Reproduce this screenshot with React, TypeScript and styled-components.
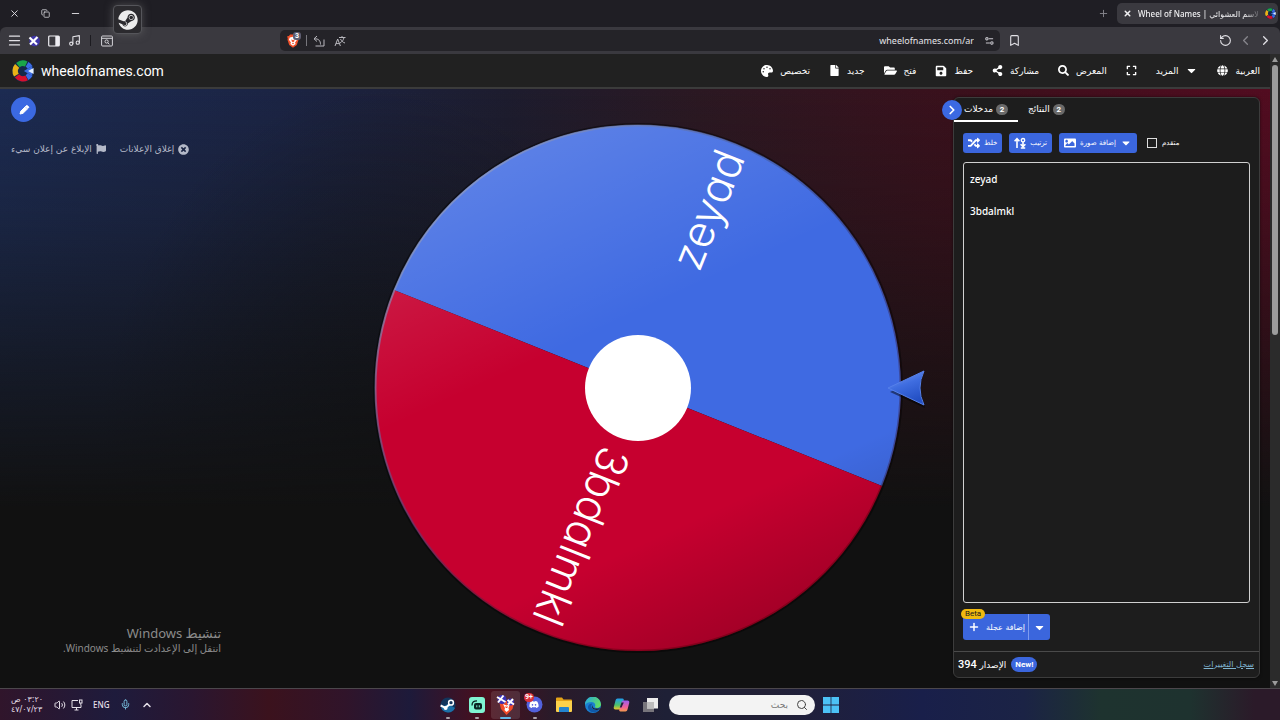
import React from "react";
import styled, { createGlobalStyle, css } from "styled-components";
import {
  FaPalette, FaFile, FaFolderOpen, FaShareAlt, FaSearch, FaExpand, FaGlobe, FaCaretDown,
  FaRandom, FaImage, FaFlag, FaTimesCircle, FaSteam, FaDiscord, FaSave,
} from "react-icons/fa";
import {
  X, Copy, Minus, Menu, Plus, Bookmark, RotateCcw, ChevronLeft, ChevronRight,
  ChevronUp, Mic, Search, Volume2, Music,
} from "lucide-react";

const GlobalStyle = createGlobalStyle`
  * { box-sizing: border-box; }
  body { margin: 0; background: #111; color: #fff; font-family: Roboto, "DejaVu Sans", sans-serif; font-size: 10px; }
  button { font: inherit; color: inherit; background: none; border: 0; padding: 0; cursor: pointer; }
  svg { display: block; flex: none; }
  a { color: inherit; }
`;

const Desktop = styled.div`
  display: flex;
  flex-direction: column;
  min-height: 100vh;
  position: relative;
  overflow: hidden;
`;

const Browser = styled.div`
  background: #1f1e24;
`;

const TabStrip = styled.div`
  display: flex;
  align-items: center;
  height: 27px;
`;

const IconButton = styled.button<{ $w?: number; $dim?: boolean }>`
  width: ${(p) => p.$w ?? 20}px;
  height: 20px;
  display: inline-flex;
  align-items: center;
  justify-content: center;
  color: ${(p) => (p.$dim ? "#88878d" : "#e2e1e6")};
`;

const Spacer = styled.div`
  flex: 1;
`;

const Tab = styled.div`
  display: flex;
  align-items: center;
  gap: 6px;
  width: 161px;
  height: 21px;
  margin: 0 2px 0 4px;
  padding: 0 8px 0 6px;
  border-radius: 5px;
  background: #3a393f;
  font-family: "Noto Sans", "DejaVu Sans", sans-serif;
  font-size: 8px;
  font-weight: 500;
  color: #f0f0f2;
`;

const TabTitle = styled.span`
  flex: 1;
  text-align: right;
  white-space: nowrap;
  mask-image: linear-gradient(to right, #000 88%, #0003);
`;

const Toolbar = styled.div`
  display: flex;
  align-items: center;
  height: 27px;
  background: #3a393f;
  border-radius: 6px 6px 0 0;
`;

const ToolGroup = styled.div`
  flex: 1;
  display: flex;
  align-items: center;
  padding: 0 5px 0 4px;
`;

const Rule = styled.span`
  width: 1px;
  height: 11px;
  background: #1c1b20;
  margin: 0 7px 0 6px;
`;

const Address = styled.div`
  flex: 0 1 720px;
  height: 21px;
  display: flex;
  align-items: center;
  gap: 6px;
  padding: 0 4px 0 6px;
  border-radius: 5px;
  background: #242328;
`;

const AddressInput = styled.input`
  flex: 1;
  min-width: 0;
  border: 0;
  outline: 0;
  background: none;
  color: #e6e5ea;
  text-align: right;
  font-family: "Noto Sans", sans-serif;
  font-size: 9px;
`;

const ThinRule = styled.span`
  width: 1px;
  height: 11px;
  background: #77767c;
`;

const BraveShield = styled.span`
  position: relative;
`;

const ShieldCount = styled.span`
  position: absolute;
  left: 7px;
  top: -2px;
  padding: 0 2px;
  border-radius: 3px;
  background: #5d5c70;
  font-size: 7px;
  line-height: 8px;
  font-weight: 700;
`;

const SteamTile = styled.div`
  position: absolute;
  left: 113px;
  top: 5px;
  width: 29px;
  height: 29px;
  display: grid;
  place-items: center;
  border: 1px solid #55555a;
  border-radius: 4px;
  background: #2b2a2e;
  box-shadow: 0 0 8px #77777788;
  color: #ececec;
`;

const Page = styled.div`
  flex: 1;
  display: flex;
  min-height: 0;
`;

const Site = styled.div`
  flex: 1;
  min-width: 0;
  display: flex;
  flex-direction: column;
`;

const AppBar = styled.header`
  display: flex;
  align-items: center;
  height: 33px;
  padding: 0 10px 0 12px;
  background: #212121;
`;

const Brand = styled.a`
  display: flex;
  align-items: center;
  gap: 7px;
  font-size: 14px;
  line-height: 20px;
  text-decoration: none;
`;

const Nav = styled.nav`
  display: flex;
  align-items: center;
  gap: 19px;
  margin-left: auto;
`;

const NavButton = styled.button`
  display: inline-flex;
  align-items: center;
  gap: 7px;
  font-family: "DejaVu Sans", sans-serif;
  font-size: 9px;
  line-height: 16px;
  white-space: nowrap;
`;

const Stage = styled.main`
  flex: 1;
  display: flex;
  padding: 8px 10px 10px 11px;
  border-top: 2px solid #ffffff2e;
  background:
    linear-gradient(to bottom, #11111100 0%, #11111138 20%, #111111a0 45%, #111111 70%),
    radial-gradient(ellipse 22% 60% at 30% 60%, #11141acc 0%, #11141a00 100%),
    linear-gradient(to right, #1c2b52 0%, #1b2444 22%, #1d1c2e 40%, #2b1822 55%, #3c0f1b 78%, #520c20 100%);
`;

const AdColumn = styled.aside`
  flex: 0 0 312px;
`;

const RoundButton = styled.button<{ $size: number }>`
  width: ${(p) => p.$size}px;
  height: ${(p) => p.$size}px;
  border-radius: 50%;
  background: #3b69e2;
  display: grid;
  place-items: center;
`;

const AdLinks = styled.div`
  display: flex;
  gap: 14px;
  margin-top: 20px;
`;

const AdLink = styled.button`
  display: inline-flex;
  align-items: center;
  gap: 4px;
  font-family: "DejaVu Sans", sans-serif;
  font-size: 9px;
  line-height: 14px;
  color: #b4b9c8;
  white-space: nowrap;
`;

const WheelArea = styled.section`
  flex: 1;
  min-width: 0;
  display: flex;
  align-items: center;
  justify-content: center;
`;

const WheelSvg = styled.svg`
  width: 100%;
  max-width: 600px;
  height: auto;
  font-family: Inter, sans-serif;
  font-weight: 300;
  font-feature-settings: "cv11";
`;

const Panel = styled.aside`
  position: relative;
  flex: 0 0 307px;
  display: flex;
  flex-direction: column;
  border: 1px solid #3c3c3c;
  border-radius: 6px;
  background: #1d1d1d;
  box-shadow: 0 0 3px #0008;
`;

const Collapse = styled.div`
  position: absolute;
  left: -12px;
  top: 2px;
`;

const Tabs = styled.div`
  display: flex;
  height: 24px;
`;

const PanelTab = styled.button<{ $active?: boolean }>`
  display: inline-flex;
  align-items: center;
  gap: 3px;
  padding: 0 10px;
  border-bottom: 2px solid ${(p) => (p.$active ? "#fff" : "transparent")};
  font-family: "DejaVu Sans", sans-serif;
  font-size: 9px;
  white-space: nowrap;
`;

const Count = styled.span`
  width: 12px;
  height: 11px;
  border-radius: 6px;
  background: #6a6a6a;
  font: 700 8px/11px Roboto, sans-serif;
  text-align: center;
`;

const Actions = styled.div`
  display: flex;
  align-items: center;
  gap: 7px;
  padding: 11px 9px 0;
`;

const ActionButton = styled.button`
  display: inline-flex;
  align-items: center;
  gap: 4px;
  height: 20px;
  padding: 0 5px;
  border-radius: 3px;
  background: #3b66dd;
  font-family: "DejaVu Sans", sans-serif;
  font-size: 7px;
  white-space: nowrap;
`;

const CheckLabel = styled.label`
  display: inline-flex;
  align-items: center;
  gap: 5px;
  margin-left: 3px;
  font-family: "DejaVu Sans", sans-serif;
  font-size: 7px;
`;

const Check = styled.input`
  appearance: none;
  width: 10px;
  height: 10px;
  margin: 0;
  border: 1px solid #ddd;
`;

const Entries = styled.textarea`
  flex: 1;
  margin: 9px 9px 0;
  padding: 8px 6px;
  border: 1px solid #d0d0d0;
  border-radius: 3px;
  outline: 0;
  resize: none;
  background: #1c1c1c;
  color: #fff;
  font: 500 10px/16px "Noto Sans", sans-serif;
`;

const AddRow = styled.div`
  display: flex;
  position: relative;
  padding: 11px 9px 11px;
`;

const SplitMain = styled.button`
  display: inline-flex;
  align-items: center;
  gap: 6px;
  width: 65px;
  height: 26px;
  padding: 0 4px 0 5px;
  border-radius: 3px 0 0 3px;
  background: #3b66dd;
  font-family: "DejaVu Sans", sans-serif;
  font-size: 8px;
  white-space: nowrap;
`;

const SplitMore = styled.button`
  width: 22px;
  height: 26px;
  display: grid;
  place-items: center;
  border-left: 1px solid #7d9bf0;
  border-radius: 0 3px 3px 0;
  background: #3b66dd;
`;

const Beta = styled.span`
  position: absolute;
  left: 7px;
  top: 6px;
  padding: 0 4px;
  border-radius: 5px;
  background: #f0b90f;
  color: #1a1a1a;
  font-size: 8px;
  line-height: 10px;
`;

const PanelFooter = styled.footer`
  display: flex;
  align-items: center;
  gap: 5px;
  height: 26px;
  padding: 0 5px 0 4px;
  border-top: 1px solid #4a4a4a;
`;

const Version = styled.span`
  font: 500 11px/16px Roboto, "DejaVu Sans", sans-serif;
`;

const VersionWord = styled.span`
  font-size: 9px;
`;

const NewBadge = styled.span`
  padding: 0 4px;
  border-radius: 8px;
  background: #3b66dd;
  font: 700 8px/15px Roboto, sans-serif;
`;

const ChangeLog = styled.a`
  margin-left: auto;
  color: #7fb4d0;
  font: 8px/14px "DejaVu Sans", sans-serif;
`;

const ScrollTrack = styled.div`
  flex: 0 0 10px;
  display: flex;
  flex-direction: column;
  align-items: center;
  padding: 3px 0 2px;
  gap: 3px;
  background: #2b2b2b;
`;

const ScrollThumb = styled.div`
  width: 6px;
  flex: 0 0 43%;
  border-radius: 3px;
  background: #9c9c9c;
`;

const ScrollArrow = styled.span<{ $down?: boolean }>`
  border: 3px solid transparent;
  ${(p) => (p.$down
    ? css`border-top: 5px solid #9c9c9c; border-bottom: 0; margin-top: auto;`
    : css`border-bottom: 5px solid #9c9c9c; border-top: 0;`)}
`;

const Watermark = styled.div`
  position: absolute;
  left: 64px;
  bottom: 64px;
  width: 157px;
  color: #8b8b8b;
  font: 10px/15px "Noto Sans", "DejaVu Sans", sans-serif;
  white-space: nowrap;
`;

const WatermarkTitle = styled.div`
  font-size: 13px;
  line-height: 16px;
`;

const Taskbar = styled.footer`
  display: flex;
  align-items: center;
  height: 32px;
  border-top: 1px solid #4c474c;
  background: linear-gradient(to right, #30152b 0%, #1e1b3c 9%, #2a1630 15%, #3b121d 21%, #30142a 27%, #1d1a3a 32%, #4a0f1c 38%, #2a1a29 43%, #1e2036 52%, #222036 60%, #191f4a 72%, #1b2345 80%, #1e332f 86%, #1e322f 93%, #2b1a29 98%);
`;

const Tray = styled.div`
  flex: 1;
  display: flex;
  align-items: center;
  gap: 5px;
  padding-left: 11px;
  color: #e4dfe8;
`;

const Clock = styled.time`
  width: 38px;
  font: 8px/10px "DejaVu Sans", sans-serif;
  text-align: left;
  white-space: nowrap;
`;

const Language = styled.span`
  margin: 0 6px 0 5px;
  font: 500 8px/12px "Noto Sans", sans-serif;
`;

const TrayButton = styled.button`
  padding-left: 5px;
`;

const Dock = styled.div`
  display: flex;
  align-items: center;
  margin-right: 13px;
`;

const DockApp = styled.button<{ $state?: "open" | "active" }>`
  position: relative;
  width: 29px;
  height: 28px;
  display: grid;
  place-items: center;
  border-radius: 3px;
  background: ${(p) => (p.$state === "active" ? "#ffffff1c" : "none")};
  &::after {
    content: "";
    display: ${(p) => (p.$state ? "block" : "none")};
    position: absolute;
    bottom: 0;
    width: ${(p) => (p.$state === "active" ? 11 : 4)}px;
    height: 2px;
    border-radius: 1px;
    background: ${(p) => (p.$state === "active" ? "#62b8e8" : "#aaa2a8")};
  }
`;

const Notice = styled.span`
  position: absolute;
  left: 4px;
  top: 2px;
  padding: 0 1px;
  border-radius: 5px;
  background: #d8303c;
  font-size: 7px;
  line-height: 9px;
  font-weight: 700;
`;

const DockSearch = styled.label`
  display: flex;
  align-items: center;
  gap: 6px;
  width: 146px;
  height: 20px;
  margin: 0 1px 0 4px;
  padding: 0 7px;
  border-radius: 10px;
  background: #f3f3f3;
  color: #444;
`;

const DockInput = styled.input`
  flex: 1;
  min-width: 0;
  border: 0;
  outline: 0;
  background: none;
  text-align: right;
  font: 9px/14px "DejaVu Sans", sans-serif;
  &::placeholder { color: #777; opacity: 1; }
`;

const DockEnd = styled.div`
  flex: 1;
`;

const WheelLogo = ({ size }: { size: number }) => (
  <svg width={size} height={size} viewBox="0 0 24 24" aria-hidden="true">
    <circle cx="12" cy="12" r="12" fill="#14294a" />
    <g fill="none" strokeWidth="6">
      <path d="M6.500 5.500A8.500 8.500 0 0 1 15.500 4.300" stroke="#1aa648" />
      <path d="M4.800 16.500A8.500 8.500 0 0 1 5.600 6.400" stroke="#eab217" />
      <path d="M16 19.500A8.500 8.500 0 0 1 5.400 17.300" stroke="#d5102e" />
      <path d="M16.400 4.800A8.500 8.500 0 0 1 19.600 8" stroke="#3b6be4" />
      <path d="M19.600 16A8.500 8.500 0 0 1 16.400 19.300" stroke="#3b6be4" />
    </g>
    <path d="M13 12l9-5.500v11z" fill="#3b6be4" />
    <path d="M17.500 12l6-3.200v6.400z" fill="#e4f1ff" />
  </svg>
);

const Pencil = () => (
  <svg width="14" height="14" viewBox="0 0 14 14">
    <path d="M3 11l.8-2.800 5.400-5.400a1 1 0 0 1 1.400 0l.8.8a1 1 0 0 1 0 1.400L6 10.300z" fill="#fff" stroke="#fff" strokeLinejoin="round" />
    <path d="M8.300 3.800l2.100 2.100" stroke="#9db6f3" strokeWidth=".6" />
  </svg>
);

const CrossPlanet = () => (
  <svg width="12" height="12" viewBox="0 0 12 12">
    <circle cx="6.600" cy="6" r="5.300" fill="#3f36a8" />
    <path d="M1.500 2.500l7.500 7M9.500 2L2 9.500" stroke="#fff" strokeWidth="2.200" />
  </svg>
);

const SidePanel = () => (
  <svg width="12" height="12" viewBox="0 0 12 12">
    <rect x=".7" y="1" width="10.600" height="10" rx="1" fill="none" stroke="#eeedf2" strokeWidth="1.200" />
    <path d="M7.300 1H11v10H7.300z" fill="#eeedf2" />
  </svg>
);

const Shield = ({ size }: { size: number }) => (
  <svg width={size} height={size} viewBox="0 0 24 24">
    <path d="M7 1h10l2 2.500 3 .5-1 4 .5 2-3 9-6.500 4.500-6.500-4.500-3-9 .5-2-1-4 3-.5z" fill="#f0512b" />
    <path d="M6.500 6l5.500-1.200L17.500 6l1.500 4-3.500 4.500 1 2.500-4.500 3-4.500-3 1-2.500L5 10z" fill="#fff" />
    <path d="M9 9l3 1.500L15 9l-1 4-2 1-2-1zM10 16l2-1 2 1-2 1.500z" fill="#f0512b" />
  </svg>
);

const SearchWindow = () => (
  <svg width="12" height="12" viewBox="0 0 12 12" fill="none" stroke="#d6d5da">
    <rect x=".6" y="1" width="10.800" height="10" rx="1" />
    <path d="M.6 3.300h10.800" />
    <circle cx="5.600" cy="6.500" r="1.600" />
    <path d="M6.800 7.800l1.600 1.500" />
  </svg>
);

const ShareBack = () => (
  <svg width="12" height="12" viewBox="0 0 12 12" fill="none" stroke="#b9b8be">
    <path d="M4 1L1 3.800l3 2.700M1 3.800C6 3.500 7.500 6 7.500 9.500M11 4.500V11H2.500" />
  </svg>
);

const Translate = () => (
  <svg width="12" height="12" viewBox="0 0 12 12" fill="none" stroke="#b9b8be">
    <path d="M1 11l2.700-7 2.700 7M2 8.600h3.400M5 2.500h6.500M8 1v1.500M6 8c2-1 3.500-3 4-5.500M6.500 4c1 2 2.500 3.500 4.500 4" />
  </svg>
);

const SiteSettings = () => (
  <svg width="9" height="8" viewBox="0 0 11 10" fill="none" stroke="#c9c8ce" strokeWidth="1.300">
    <circle cx="2.300" cy="2.300" r="1.500" />
    <path d="M4.800 2.300H10M1 7.500h5" />
    <circle cx="8.500" cy="7.500" r="1.500" />
  </svg>
);

const SortIcon = () => (
  <svg width="12" height="12" viewBox="0 0 12 12" fill="none" stroke="#fff" strokeWidth="1.600">
    <path d="M3 11V1.800M.6 4.200L3 1.600l2.400 2.600" />
    <circle cx="9" cy="3.200" r="1.700" strokeWidth="1.400" />
    <path d="M9 5v5M6.600 7.200L9 9.600l2.400-2.400M6.800 11h4.400" />
  </svg>
);

const MonitorIcon = () => (
  <svg width="12" height="12" viewBox="0 0 12 12" fill="none" stroke="#e4dfe8">
    <path d="M7 1.500H1v7h9V6M3.500 11h4M5.500 8.500V11" />
    <rect x="8.500" y="1" width="2.500" height="3" />
    <path d="M9.800 4v2" />
  </svg>
);

const SteamApp = () => (
  <svg width="16" height="16" viewBox="0 0 16 16">
    <circle cx="8" cy="8" r="7.600" fill="#12355c" />
    <path d="M1 10.500A7.600 7.600 0 0 0 15 11L8 7z" fill="#1c6fa6" />
    <path d="M.6 8.500l5 2.300 4.600-4" stroke="#fff" strokeWidth="2" fill="none" />
    <circle cx="11" cy="5.700" r="2.400" fill="#12355c" stroke="#fff" strokeWidth="1.500" />
    <circle cx="5.600" cy="11" r="2" fill="#fff" />
  </svg>
);

const StreamApp = () => (
  <svg width="16" height="16" viewBox="0 0 16 16">
    <rect width="16" height="16" rx="3" fill="#80f5d2" />
    <rect x="5" y="6" width="8" height="6.500" rx="2" fill="#0a2422" />
    <path d="M3 8.500C3 5 5 3.800 8 3.800" stroke="#0a2422" strokeWidth="1.300" fill="none" />
    <path d="M7.800 8.300v2M10.300 8.300v2" stroke="#80f5d2" />
  </svg>
);

const BraveApp = () => (
  <svg width="20" height="22" viewBox="0 0 20 22">
    <path d="M5 7h10l3 2-1.500 6-6 6L5 15 3.500 9z" fill="#f04a28" />
    <path d="M7 10l3.500 1.500L14 10l-1.500 4 .5 2-2.500 2-2-2 .5-2z" fill="#fff" />
    <path d="M9.300 12l1.200.8 1.200-.8-.4 2h-1.600z" fill="#f04a28" />
    <circle cx="6" cy="5.500" r="4.500" fill="#3b33b8" />
    <circle cx="14.500" cy="8" r="3.500" fill="#3b33b8" />
    <path d="M1 3l8.500 5M7.500 1.500L2 8.500M11.500 6l6.500 4.500M17 5l-5 5.500" stroke="#fff" strokeWidth="2" />
  </svg>
);

const DiscordApp = () => (
  <svg width="17" height="17" viewBox="0 0 17 17">
    <circle cx="8.500" cy="8.500" r="8" fill="#5261dd" />
    <FaDiscord x="3" y="3.500" width="11" height="11" color="#fff" />
  </svg>
);

const FolderApp = () => (
  <svg width="18" height="16" viewBox="0 0 18 16">
    <path d="M1 1.500A1 1 0 0 1 2 .5h5l1.500 2H16a1 1 0 0 1 1 1V6H1z" fill="#e5a417" />
    <path d="M1 4h16v10a1 1 0 0 1-1 1H2a1 1 0 0 1-1-1z" fill="#fbd14b" />
    <path d="M4 15v-4a1 1 0 0 1 1-1h8a1 1 0 0 1 1 1v4z" fill="#2384cf" />
  </svg>
);

const EdgeApp = () => (
  <svg width="16" height="16" viewBox="0 0 16 16">
    <defs>
      <linearGradient id="edgeTop" x1="0" y1="0" x2="1" y2=".4">
        <stop offset="0" stopColor="#25a6e4" />
        <stop offset="1" stopColor="#5fdb67" />
      </linearGradient>
    </defs>
    <circle cx="8" cy="8" r="8" fill="#1b7fd0" />
    <path d="M0 8a8 8 0 0 1 16-.8c0 2.500-2 3.800-4 3.800-1.600 0-2.600-.8-2-1.600C11 7.500 9.500 5 6.500 5 3.500 5 1 6 0 8z" fill="url(#edgeTop)" />
    <path d="M6.500 8c-1 3 2 6 7.500 4.500C11 17 4 16 3 11c-.4-2.500 1.500-4.500 4.500-4.500z" fill="#0f58a8" />
    <path d="M8 7.500c-1.500 2 .5 4.500 4 4 1.500 0 2.500-.5 3-1l-.8 1.800c-2.200 1.200-7.700.8-7.200-3.300z" fill="#21202f" />
  </svg>
);

const CopilotApp = () => (
  <svg width="17" height="16" viewBox="0 0 17 16">
    <defs>
      <linearGradient id="copLeft" x1="0" y1="0" x2="0" y2="1">
        <stop offset="0" stopColor="#1f9df0" />
        <stop offset=".6" stopColor="#4cc26a" />
        <stop offset="1" stopColor="#f2c52a" />
      </linearGradient>
      <linearGradient id="copRight" x1="0" y1="0" x2="0" y2="1">
        <stop offset="0" stopColor="#9a5df0" />
        <stop offset=".6" stopColor="#f0609a" />
        <stop offset="1" stopColor="#f59a4c" />
      </linearGradient>
    </defs>
    <path d="M4.500 1.500h5c1 0 1.500.8 1.200 1.700L8.300 11c-.4 1-1 1.500-2 1.500H2.500C1 12.500.4 11.500.8 10l1.700-6.500c.3-1.300 1-2 2-2z" fill="url(#copLeft)" />
    <path d="M12.500 14.500h-5c-1 0-1.500-.8-1.200-1.700L8.700 5c.4-1 1-1.500 2-1.500h3.800c1.500 0 2.100 1 1.700 2.500l-1.700 6.500c-.3 1.300-1 2-2 2z" fill="url(#copRight)" />
    <path d="M8.500 5.500h2.300L8.500 10.500H6.800z" fill="#23203a" />
  </svg>
);

const TaskViewApp = () => (
  <svg width="17" height="16" viewBox="0 0 17 16">
    <rect x="1" y="5" width="11" height="10" fill="#77757b" />
    <rect x="5" y="1" width="11" height="10.500" fill="#ececec" />
    <rect x="5" y="5" width="7" height="6.500" fill="#bcbcbc" />
  </svg>
);

const WindowsApp = () => (
  <svg width="16" height="16" viewBox="0 0 16 16" fill="#4cc2f5">
    <path d="M0 0h7.600v7.600H0zM8.400 0H16v7.600H8.400zM0 8.400h7.600V16H0zM8.400 8.400H16V16H8.400z" />
  </svg>
);

const Wheel = () => (
  <WheelSvg viewBox="0 0 600 560" role="img" aria-label="Wheel">
    <defs>
      <linearGradient id="shine" x1=".3" y1="0" x2=".75" y2=".98">
        <stop offset="0" stopColor="#fff" stopOpacity=".16" />
        <stop offset=".38" stopColor="#fff" stopOpacity="0" />
        <stop offset=".75" stopColor="#000" stopOpacity="0" />
        <stop offset="1" stopColor="#000" stopOpacity=".2" />
      </linearGradient>
      <linearGradient id="rim" x1="0" y1="0" x2=".7" y2=".7">
        <stop offset="0" stopColor="#b9c2dc" stopOpacity=".8" />
        <stop offset=".6" stopColor="#40508a" stopOpacity=".5" />
        <stop offset="1" stopColor="#300" stopOpacity=".3" />
      </linearGradient>
      <linearGradient id="pointer" x1="0" y1="0" x2=".4" y2="1">
        <stop offset="0" stopColor="#7fa2f5" />
        <stop offset=".5" stopColor="#3f6de0" />
        <stop offset="1" stopColor="#2450c4" />
      </linearGradient>
    </defs>
    <g transform="translate(300 280)">
      <circle r="265" fill="#0006" />
      <g transform="rotate(21.900)">
        <path d="M-263 0A263 263 0 0 1 263 0z" fill="#3f6ae2" />
        <path d="M263 0A263 263 0 0 1-263 0z" fill="#c6002f" />
      </g>
      <circle r="263" fill="url(#shine)" />
      <circle r="262.500" fill="none" stroke="url(#rim)" strokeWidth="2" />
      <g fill="#fff" fontSize="44" textAnchor="end">
        <text x="254" y="14" transform="rotate(-68.100)">zeyad</text>
        <text x="253" y="13" transform="rotate(111.900)">3bdalmkl</text>
      </g>
      <circle r="53" fill="#fff" />
      <path d="M252 4L284-12l-2 14 5 18z" fill="#0007" />
      <path d="M250 0L286-17Q278 0 286 17z" fill="url(#pointer)" stroke="#5580ea" strokeWidth="1" />
    </g>
  </WheelSvg>
);

const navItems = [
  { icon: <FaPalette size={12} />, text: "تخصيص" },
  { icon: <FaFile size={11} />, text: "جديد" },
  { icon: <FaFolderOpen size={13} />, text: "فتح" },
  { icon: <FaSave size={12} />, text: "حفظ" },
  { icon: <FaShareAlt size={11} />, text: "مشاركة" },
  { icon: <FaSearch size={11} />, text: "المعرض" },
];

export default function App() {
  return (
    <Desktop>
      <GlobalStyle />
      <Browser>
        <TabStrip>
          <IconButton $w={29} aria-label="Close"><X size={11} /></IconButton>
          <IconButton $w={32} aria-label="Restore"><Copy size={9} /></IconButton>
          <IconButton $w={29} aria-label="Minimise"><Minus size={11} /></IconButton>
          <Spacer />
          <IconButton aria-label="New tab" $dim><Plus size={11} /></IconButton>
          <Tab>
            <X size={9} strokeWidth={4} />
            <TabTitle>Wheel of Names | لاسم العشوائي</TabTitle>
            <WheelLogo size={11} />
          </Tab>
        </TabStrip>
        <Toolbar>
          <ToolGroup>
            <IconButton aria-label="Menu"><Menu size={15} /></IconButton>
            <IconButton aria-label="Profile"><CrossPlanet /></IconButton>
            <IconButton aria-label="Side panel"><SidePanel /></IconButton>
            <IconButton aria-label="Media"><Music size={13} /></IconButton>
            <Rule />
            <IconButton $w={18} aria-label="Search tabs"><SearchWindow /></IconButton>
          </ToolGroup>
          <Address>
            <BraveShield><Shield size={14} /><ShieldCount>3</ShieldCount></BraveShield>
            <ThinRule />
            <IconButton $w={12} aria-label="Share"><ShareBack /></IconButton>
            <IconButton $w={18} aria-label="Translate"><Translate /></IconButton>
            <AddressInput aria-label="Address" defaultValue="wheelofnames.com/ar" />
            <IconButton $w={14} aria-label="Site settings"><SiteSettings /></IconButton>
          </Address>
          <ToolGroup>
            <IconButton aria-label="Bookmark"><Bookmark size={13} /></IconButton>
            <Spacer />
            <IconButton aria-label="Reload"><RotateCcw size={13} /></IconButton>
            <IconButton aria-label="Forward" $dim><ChevronLeft size={15} /></IconButton>
            <IconButton aria-label="Back"><ChevronRight size={15} /></IconButton>
          </ToolGroup>
        </Toolbar>
      </Browser>

      <Page>
        <Site>
          <AppBar>
            <Brand href="#"><WheelLogo size={22} />wheelofnames.com</Brand>
            <Nav>
              {navItems.map((n) => (
                <NavButton key={n.text}>{n.icon}{n.text}</NavButton>
              ))}
              <NavButton aria-label="Fullscreen"><FaExpand size={11} /></NavButton>
              <NavButton>المزيد<FaCaretDown size={13} /></NavButton>
              <NavButton><FaGlobe size={11} />العربية</NavButton>
            </Nav>
          </AppBar>
          <Stage>
            <AdColumn>
              <RoundButton $size={25} aria-label="Edit"><Pencil /></RoundButton>
              <AdLinks>
                <AdLink>الإبلاغ عن إعلان سيء<FaFlag size={10} /></AdLink>
                <AdLink>إغلاق الإعلانات<FaTimesCircle size={11} /></AdLink>
              </AdLinks>
            </AdColumn>
            <WheelArea><Wheel /></WheelArea>
            <Panel>
              <Tabs>
                <PanelTab $active>مدخلات<Count>2</Count></PanelTab>
                <PanelTab>النتائج<Count>2</Count></PanelTab>
              </Tabs>
              <Collapse>
                <RoundButton $size={20} aria-label="Collapse"><ChevronRight size={14} strokeWidth={3} /></RoundButton>
              </Collapse>
              <Actions>
                <ActionButton><FaRandom size={12} />خلط</ActionButton>
                <ActionButton><SortIcon />ترتيب</ActionButton>
                <ActionButton><FaImage size={12} />إضافة صورة<FaCaretDown size={12} /></ActionButton>
                <CheckLabel><Check type="checkbox" />متقدم</CheckLabel>
              </Actions>
              <Entries aria-label="Entries" spellCheck={false} defaultValue={"zeyad\n\n3bdalmkl"} />
              <AddRow>
                <SplitMain><Plus size={12} strokeWidth={3} />إضافة عجلة</SplitMain>
                <SplitMore aria-label="More"><FaCaretDown size={13} /></SplitMore>
                <Beta>Beta</Beta>
              </AddRow>
              <PanelFooter>
                <Version dir="rtl"><VersionWord>الإصدار</VersionWord> 394</Version>
                <NewBadge>New!</NewBadge>
                <ChangeLog href="#">سجل التغييرات</ChangeLog>
              </PanelFooter>
            </Panel>
          </Stage>
        </Site>
        <ScrollTrack>
          <ScrollArrow />
          <ScrollThumb />
          <ScrollArrow $down />
        </ScrollTrack>
      </Page>

      <Taskbar>
        <Tray>
          <Clock dir="rtl">٠٣:٢٠ ص<br />٤٧/٠٧/٢٣</Clock>
          <Volume2 size={12} />
          <MonitorIcon />
          <Language>ENG</Language>
          <Mic size={11} color="#7cc6e6" />
          <TrayButton aria-label="Hidden icons"><ChevronUp size={12} strokeWidth={3} /></TrayButton>
        </Tray>
        <Dock>
          <DockApp $state="open" aria-label="Steam"><SteamApp /></DockApp>
          <DockApp $state="open" aria-label="Streamlabs"><StreamApp /></DockApp>
          <DockApp $state="active" aria-label="Brave"><BraveApp /></DockApp>
          <DockApp $state="open" aria-label="Discord"><DiscordApp /><Notice>9+</Notice></DockApp>
          <DockApp aria-label="Files"><FolderApp /></DockApp>
          <DockApp aria-label="Edge"><EdgeApp /></DockApp>
          <DockApp aria-label="Copilot"><CopilotApp /></DockApp>
          <DockApp aria-label="Task view"><TaskViewApp /></DockApp>
          <DockSearch>
            <DockInput placeholder="بحث" aria-label="بحث" />
            <Search size={12} />
          </DockSearch>
          <DockApp aria-label="Start"><WindowsApp /></DockApp>
        </Dock>
        <DockEnd />
      </Taskbar>

      <SteamTile><FaSteam size={20} /></SteamTile>
      <Watermark dir="rtl">
        <WatermarkTitle>تنشيط Windows</WatermarkTitle>
        انتقل إلى الإعدادت لتنشيط Windows.
      </Watermark>
    </Desktop>
  );
}
